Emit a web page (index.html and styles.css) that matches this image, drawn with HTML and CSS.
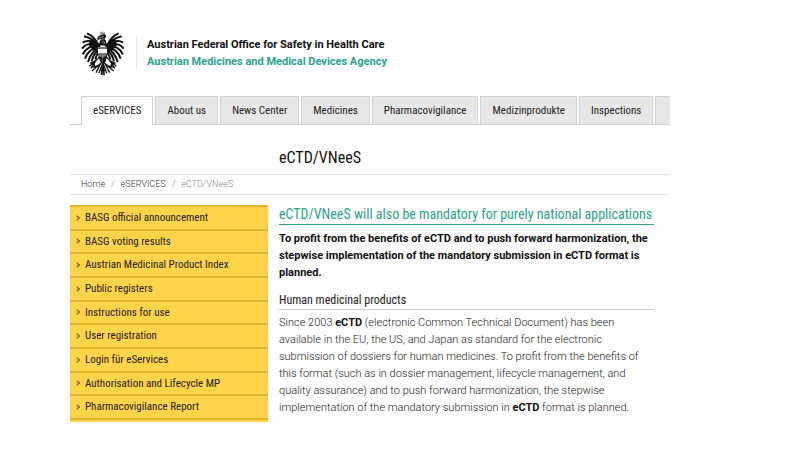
FILE: index.html
```html
<!DOCTYPE html>
<html lang="en">

<head>
    <meta charset="UTF-8">
    <meta name="viewport" content="width=device-width, initial-scale=1.0">
    <title>eCTD/VNeeS - BASG</title>
    <link rel="stylesheet" href="styles.css">
</head>

<body>
    <div class="container">
        <header class="header">
            <svg class="eagle" viewBox="33 28 129 138" role="img" aria-label="Austrian eagle">
                <!-- left half, mirrored below for the right one -->
                <g id="half">
                    <g class="feathers">
                        <path d="M82 68C76 54 64 44 51 38"/>
                        <path d="M80 68C66 54 54 50 42 47"/>
                        <path d="M80 70C62 58 46 60 38 66"/>
                        <path d="M80 74C60 66 44 72 36 84"/>
                        <path d="M80 78C64 74 46 84 38 101"/>
                        <path d="M80 82C68 82 52 94 45 114"/>
                        <path d="M82 86C72 88 60 104 54 124"/>
                        <path d="M84 92C77 94 69 108 65 122"/>
                        <path d="M86 96C82 100 77 108 76 116"/>
                    </g>
                    <path d="M62 54Q76 56 84 66L91 70V94H82Q66 90 56 72Z"/>
                    <path d="M84 99L98 103V130L90 122Z"/>
                    <g class="lines">
                        <path d="M90 106Q80 121 60 128M80 118L58 137M76 122L63 143M72 127L74 140"/>
                        <path d="M97 124Q84 135 66 151M91 130L78 156M86 135L64 140"/>
                        <path d="M97 130L87 158M98 136L94 163"/>
                    </g>
                </g>
                <use href="#half" transform="matrix(-1 0 0 1 197 0)"/>
                <path class="shield" d="M84 79H111V97Q110 107 98 112Q85 107 84 97Z"/>
                <path class="band" d="M84 85H111V97H84Z"/>
                <path d="M89 74Q86 61 95 56L87 56L82 61Q80 52 86 46L94 42L102 40Q110 43 108 50L103 55Q113 61 106 75Z"/>
                <path class="gap" d="M86 52L94 50L101 46M94 57L101 54M100 60L96 66M104 64L101 70"/>
                <path class="crown" d="M91 41L89 34L94 36L97 31L100 36L106 34L104 41Z"/>
                <path class="lines" d="M99 124V164M94 151L99 145L104 151"/>
            </svg>
            <div class="brand">
                <p>Austrian Federal Office for Safety in Health Care</p>
                <p class="agency">Austrian Medicines and Medical Devices Agency</p>
            </div>
        </header>

        <nav class="tabs" aria-label="Main">
            <a class="active" href="#">eSERVICES</a>
            <a href="#">About us</a>
            <a href="#">News Center</a>
            <a href="#">Medicines</a>
            <a href="#">Pharmacovigilance</a>
            <a href="#">Medizinprodukte</a>
            <a href="#">Inspections</a>
            <a class="more" href="#" aria-label="More"></a>
        </nav>

        <h1>eCTD/VNeeS</h1>

        <nav class="breadcrumb" aria-label="Breadcrumb">
            <a href="#">Home</a>
            <span>/</span>
            <a href="#">eSERVICES</a>
            <span>/</span>
            <span class="current">eCTD/VNeeS</span>
        </nav>

        <div class="columns">
            <nav class="sidebar" aria-label="eServices">
                <ul>
                    <li><a href="#">BASG official announcement</a></li>
                    <li><a href="#">BASG voting results</a></li>
                    <li><a href="#">Austrian Medicinal Product Index</a></li>
                    <li><a href="#">Public registers</a></li>
                    <li><a href="#">Instructions for use</a></li>
                    <li><a href="#">User registration</a></li>
                    <li><a href="#">Login für eServices</a></li>
                    <li><a href="#">Authorisation and Lifecycle MP</a></li>
                    <li><a href="#">Pharmacovigilance Report</a></li>
                </ul>
            </nav>
            <main class="content">
                <h2>eCTD/VNeeS will also be mandatory for purely national applications</h2>
                <p class="intro">To profit from the benefits of eCTD and to push forward harmonization, the stepwise implementation of the mandatory submission in eCTD format is planned.</p>
                <h3>Human medicinal products</h3>
                <p>Since 2003 <b>eCTD</b> (electronic Common Technical Document) has been available in the EU, the US, and Japan as standard for the electronic submission of dossiers for human medicines. To profit from the benefits of this format (such as in dossier management, lifecycle management, and quality assurance) and to push forward harmonization, the stepwise implementation of the mandatory submission in <b>eCTD</b> format is planned.</p>
            </main>
        </div>
    </div>
</body>

</html>
```
FILE: styles.css
```css
* {
    margin: 0;
    padding: 0;
    box-sizing: border-box;
}

body {
    font-family: Roboto, sans-serif;
    font-size: 11px;
    line-height: 17px;
    color: #222;
    background: #fefefe;
}

a {
    color: inherit;
    text-decoration: none;
}

.container {
    width: 75%;
    margin-left: 70px;
    padding-top: 30px;
}

/* header */
.header {
    display: flex;
    gap: 12px;
    padding-left: 11px;
    height: 66px;
}

.eagle {
    width: 43px;
    height: 46px;
    fill: #111;
}

.feathers,
.lines {
    fill: none;
    stroke: #111;
    stroke-width: 6;
}

.lines {
    stroke-width: 4;
}

.shield {
    fill: #777;
}

.band {
    fill: #fff;
}

.gap {
    fill: none;
    stroke: #ddd;
    stroke-width: 2;
}

.crown {
    fill: #888;
}

.brand {
    margin-top: 6px;
    height: 34px;
    padding-left: 10px;
    border-left: 1px solid #e6e6e6;
    font-weight: bold;
    color: #111;
    white-space: nowrap;
}

.brand .agency {
    color: #2ba38b;
}

/* tabs, the active one covers the line below */
.tabs {
    display: flex;
    gap: 2px;
    height: 29px;
    padding-left: 11px;
    overflow: hidden;
    box-shadow: inset 0 -1px #d2d2d2;
    font-family: "Roboto Condensed", Roboto, sans-serif;
    line-height: 28px;
    white-space: nowrap;
}

.tabs a {
    flex: none;
    padding: 0 11px;
    background: #e7e7e7;
    border: 1px solid #d2d2d2;
}

.tabs .active {
    background: #fefefe;
    border-bottom: none;
}

.tabs .more {
    width: 80px;
}

h1,
h2,
h3 {
    font-family: "Roboto Condensed", Roboto, sans-serif;
    font-weight: normal;
}

h1 {
    padding: 20px 0 4px 209px;
    font-size: 16px;
    line-height: 25px;
    color: #111;
}

.breadcrumb {
    display: flex;
    gap: 6px;
    padding-left: 11px;
    border-top: 1px solid #e6e6e6;
    border-bottom: 1px solid #e6e6e6;
    font-size: 9px;
    font-weight: 300;
    line-height: 19px;
    color: #333;
}

.breadcrumb span {
    color: #888;
}

/* columns */
.columns {
    display: flex;
    align-items: flex-start;
    gap: 11px;
    padding-top: 10px;
}

.sidebar {
    width: 33%;
    background: #ffd34a;
    font-family: "Roboto Condensed", Roboto, sans-serif;
    padding-bottom: 2px;
}

.sidebar ul {
    display: flex;
    flex-direction: column;
    height: 215px;
    list-style: none;
    border-bottom: 2px solid #e3b52c;
}

.sidebar li {
    flex: 1;
    border-top: 2px solid #e3b52c;
}

.sidebar a {
    display: flex;
    align-items: center;
    gap: 6px;
    padding-left: 5px;
    line-height: 21px;
}

.sidebar a::before {
    content: "";
    width: 3px;
    height: 3px;
    border-top: 1px solid #6b5310;
    border-right: 1px solid #6b5310;
    transform: rotate(45deg);
}

.content {
    flex: 1;
    padding-right: 16px;
    font-weight: 300;
}

h2 {
    margin-bottom: 5px;
    border-bottom: 1px solid #2ba38b;
    font-size: 14px;
    line-height: 19px;
    color: #2ba38b;
    white-space: nowrap;
}

.intro {
    margin-bottom: 10px;
    font-weight: bold;
    color: #111;
}

h3 {
    margin-bottom: 4px;
    border-bottom: 1px solid #ccc;
    font-size: 12px;
    line-height: 18px;
}

.content b {
    font-weight: bold;
    color: #111;
}
```
